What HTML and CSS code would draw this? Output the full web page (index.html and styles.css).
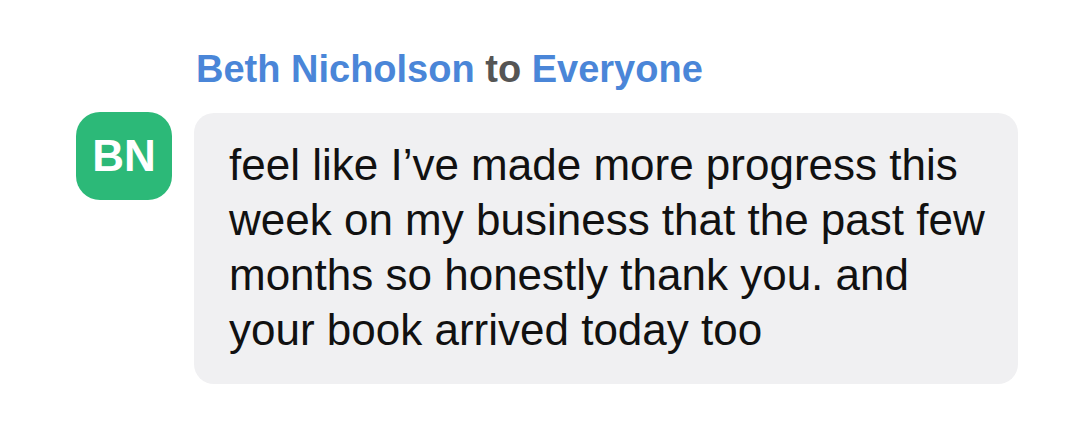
FILE: index.html
```html
<!DOCTYPE html>
<html lang="en">
<head>
<meta charset="utf-8">
<title>Chat message</title>
<link rel="stylesheet" href="styles.css">
</head>
<body>
<div class="chat">
  <div class="message">
    <div class="meta"><span class="name">Beth Nicholson</span> <span class="to">to</span> <span class="name">Everyone</span></div>
    <div class="avatar">BN</div>
    <div class="bubble">feel like I’ve made more progress this week on my business that the past few months so honestly thank you. and your book arrived today too</div>
  </div>
</div>
</body>
</html>
```
FILE: styles.css
```css
html, body {
  margin: 0;
  padding: 0;
  background: #ffffff;
}
body {
  font-family: "Liberation Sans", Arial, Helvetica, sans-serif;
  width: 1080px;
  height: 430px;
  overflow: hidden;
}
.chat {
  padding: 47px 0 0 76px;
}
.message {
  display: grid;
  grid-template-columns: 96px 824px;
  column-gap: 22px;
  row-gap: 22px;
  align-items: start;
}
.meta {
  grid-column: 2;
  grid-row: 1;
  font-size: 38px;
  line-height: 44px;
  font-weight: bold;
  padding-left: 2px;
  white-space: nowrap;
}
.name {
  color: #4a86d8;
}
.to {
  color: #555555;
}
.avatar {
  grid-column: 1;
  grid-row: 2;
  width: 96px;
  height: 88px;
  border-radius: 24px;
  background: #2cb978;
  color: #ffffff;
  font-weight: bold;
  font-size: 44px;
  display: flex;
  align-items: center;
  justify-content: center;
  margin-top: -1px;
}
.bubble {
  grid-column: 2;
  grid-row: 2;
  background: #f0f0f2;
  border-radius: 20px;
  padding: 24px 25px 27px 35px;
  font-size: 44px;
  line-height: 55px;
  color: #111111;
}
```
